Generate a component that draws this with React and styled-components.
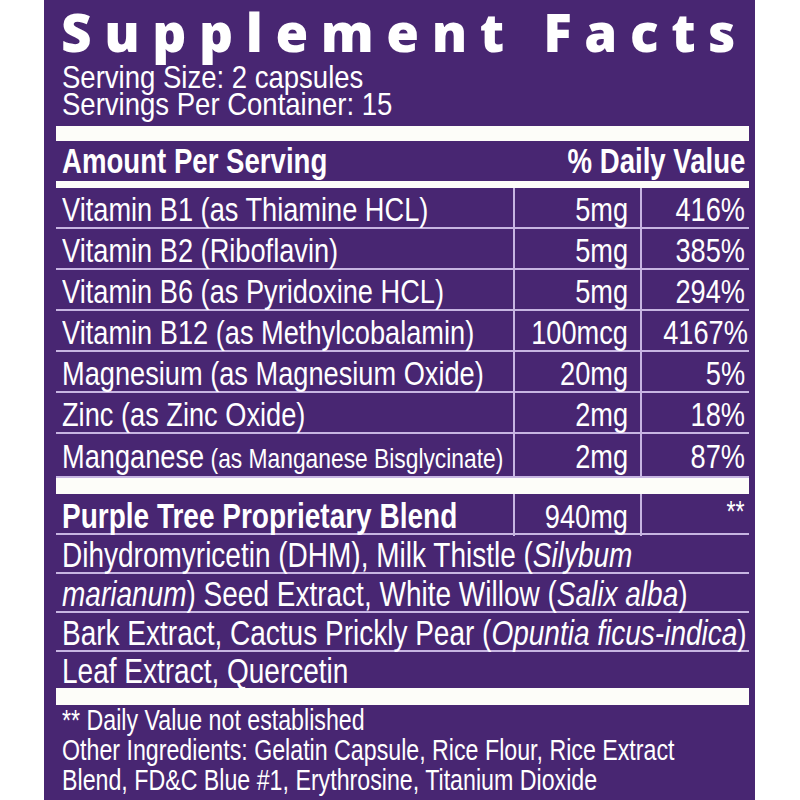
import styled, { createGlobalStyle } from "styled-components";

const PURPLE = "#482672";
const LINE = "#c7b5e2";
const BAR = "#fdfdf9";

const GlobalStyle = createGlobalStyle`
    html, body {
        margin: 0;
        padding: 0;
        background: #ffffff;
    }
`;

const nutrients = [
    { name: "Vitamin B1 (as Thiamine HCL)", amount: "5mg", dv: "416%" },
    { name: "Vitamin B2 (Riboflavin)", amount: "5mg", dv: "385%" },
    { name: "Vitamin B6 (as Pyridoxine HCL)", amount: "5mg", dv: "294%" },
    { name: "Vitamin B12 (as Methylcobalamin)", amount: "100mcg", dv: "4167%" },
    { name: "Magnesium (as Magnesium Oxide)", amount: "20mg", dv: "5%" },
    { name: "Zinc (as Zinc Oxide)", amount: "2mg", dv: "18%" },
    { name: "Manganese", small: "(as Manganese Bisglycinate)", amount: "2mg", dv: "87%", tall: true },
];

const App = () => {
    return (
        <>
            <GlobalStyle />
            <Panel>
                <Title>Supplement Facts</Title>
                <Serving>
                    <Cond $sx={0.86}>Serving Size: 2 capsules</Cond>
                    <Cond $sx={0.86}>Servings Per Container: 15</Cond>
                </Serving>
                <Bar $h={15} />
                <HeaderRow>
                    <Cond>Amount Per Serving</Cond>
                    <Cond $right>% Daily Value</Cond>
                </HeaderRow>
                <Bar $h={7} />
                {nutrients.map((n) => (
                    <Row key={n.name} $h={n.tall ? 44 : 41}>
                        <NameCell>
                            <Cond>
                                {n.name}
                                {n.small && <Small>{n.small}</Small>}
                            </Cond>
                        </NameCell>
                        <ValueCell><Cond $right>{n.amount}</Cond></ValueCell>
                        <DvCell><Cond $right>{n.dv}</Cond></DvCell>
                    </Row>
                ))}
                <Bar $h={16} />
                <Row $h={41}>
                    <NameCell $bold><Cond>Purple Tree Proprietary Blend</Cond></NameCell>
                    <ValueCell><Cond $right>940mg</Cond></ValueCell>
                    <DvCell $top><Cond $right>**</Cond></DvCell>
                </Row>
                <Line>
                    <Cond>Dihydromyricetin (DHM), Milk Thistle (<i>Silybum</i></Cond>
                </Line>
                <Line>
                    <Cond><i>marianum</i>) Seed Extract, White Willow (<i>Salix alba</i>)</Cond>
                </Line>
                <Line>
                    <Cond>Bark Extract, Cactus Prickly Pear (<i>Opuntia ficus-indica</i>)</Cond>
                </Line>
                <Line $h={36} $last>
                    <Cond>Leaf Extract, Quercetin</Cond>
                </Line>
                <Bar $h={17} />
                <Footnote>
                    <Cond>** Daily Value not established</Cond>
                    <Cond>Other Ingredients: Gelatin Capsule, Rice Flour, Rice Extract</Cond>
                    <Cond>Blend, FD&amp;C Blue #1, Erythrosine, Titanium Dioxide</Cond>
                </Footnote>
            </Panel>
        </>
    );
};

export default App;

const Panel = styled.div`
    margin-left: 44px;
    width: 711px;
    height: 800px;
    box-sizing: border-box;
    padding: 0 6px 0 12px;
    background-color: ${PURPLE};
    color: #ffffff;
    font-family: "Liberation Sans", Arial, sans-serif;
`;

/* the label face is a condensed grotesk; squeeze Arial-width text to match */
const Cond = styled.span`
    display: inline-block;
    white-space: nowrap;
    transform: scaleX(${(p) => p.$sx || 0.8});
    transform-origin: ${(p) => (p.$right ? "right" : "left")} center;

    i {
        font-style: italic;
    }
`;

const Title = styled.h1`
    width: fit-content;
    margin: 0;
    padding: 2px 0 0 5px;
    height: 62px;
    font-family: "Open Sans", sans-serif;
    font-weight: 800;
    font-size: 53px;
    line-height: 60px;
    letter-spacing: 12.6px;
    white-space: nowrap;
`;

const Serving = styled.div`
    display: flex;
    flex-direction: column;
    align-items: flex-start;
    padding: 0 0 8px 6px;
    font-size: 32px;
    line-height: 27px;
`;

const Bar = styled.div`
    height: ${(p) => p.$h}px;
    background-color: ${BAR};
`;

const HeaderRow = styled.div`
    display: flex;
    justify-content: space-between;
    align-items: center;
    height: 40px;
    padding: 0 4px 0 6px;
    font-size: 34.5px;
    font-weight: 700;
`;

const Row = styled.div`
    display: grid;
    grid-template-columns: 457px 127px 1fr;
    height: ${(p) => p.$h}px;
    box-sizing: border-box;
    border-bottom: 2px solid ${LINE};
    font-size: 34px;
`;

const NameCell = styled.div`
    display: flex;
    align-items: center;
    padding: 2px 0 0 6px;
    font-weight: ${(p) => (p.$bold ? 700 : 400)};
    font-size: ${(p) => (p.$bold ? "35px" : "inherit")};
`;

const Small = styled.span`
    font-size: 28.5px;
    margin-left: 8px;
`;

const ValueCell = styled.div`
    display: flex;
    align-items: center;
    justify-content: flex-end;
    padding: 2px 12px 0 0;
    border-left: 2px solid ${LINE};
`;

const DvCell = styled.div`
    display: flex;
    align-items: ${(p) => (p.$top ? "flex-start" : "center")};
    justify-content: flex-end;
    padding: ${(p) => (p.$top ? "1px" : "2px")} 4px 0 0;
    font-size: ${(p) => (p.$top ? "29px" : "inherit")};
    border-left: 2px solid ${LINE};
`;

const Line = styled.div`
    display: flex;
    align-items: center;
    height: ${(p) => p.$h || 39}px;
    box-sizing: border-box;
    padding: 2px 0 0 6px;
    border-bottom: ${(p) => (p.$last ? "none" : `2px solid ${LINE}`)};
    font-size: 35px;
`;

const Footnote = styled.div`
    display: flex;
    flex-direction: column;
    align-items: flex-start;
    padding: 0 0 0 6px;
    font-size: 29px;
    line-height: 30px;
`;
